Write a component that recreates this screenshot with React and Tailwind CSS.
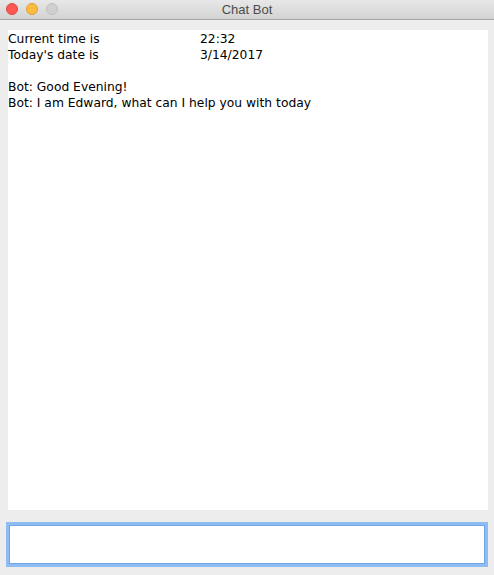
import React from 'react';

function App() {
  return (
    <div className="w-[494px] h-[575px] bg-[#ededed] flex flex-col overflow-hidden">
      <div className="h-[20px] relative flex items-center justify-center bg-gradient-to-b from-[#e8e8e8] to-[#d3d3d3] border-b border-[#a8a8a8]">
        <div className="absolute left-[6px] top-[3px] flex gap-[8px]">
          <span className="w-[12px] h-[12px] rounded-full bg-[#fc5753] border border-[#df4744]"></span>
          <span className="w-[12px] h-[12px] rounded-full bg-[#fdbc40] border border-[#de9f34]"></span>
          <span className="w-[12px] h-[12px] rounded-full bg-[#d0d0d0] border border-[#c0c0c0]"></span>
        </div>
        <span className="text-[13px] text-[#4d4d4d] font-['Liberation_Sans',sans-serif]">Chat Bot</span>
      </div>
      <div className="flex flex-col pt-[10px]">
        <div className="ml-[8px] w-[480px] h-[480px] bg-white pt-[1px] text-[12.3px] leading-[16px] text-black font-['DejaVu_Sans',sans-serif]">
          <div className="grid grid-cols-[192px_1fr]">
            <span>Current time is</span>
            <span>22:32</span>
            <span>Today's date is</span>
            <span>3/14/2017</span>
          </div>
          <div className="mt-[16px]">Bot: Good Evening!</div>
          <div>Bot: I am Edward, what can I help you with today</div>
        </div>
        <div className="mt-[12px] ml-[6px] w-[482px] h-[45px] border-[3px] border-[#8fbcf2] bg-white shadow-[inset_0_0_0_1px_#6fa6ea]"></div>
      </div>
    </div>
  );
}

export default App;
